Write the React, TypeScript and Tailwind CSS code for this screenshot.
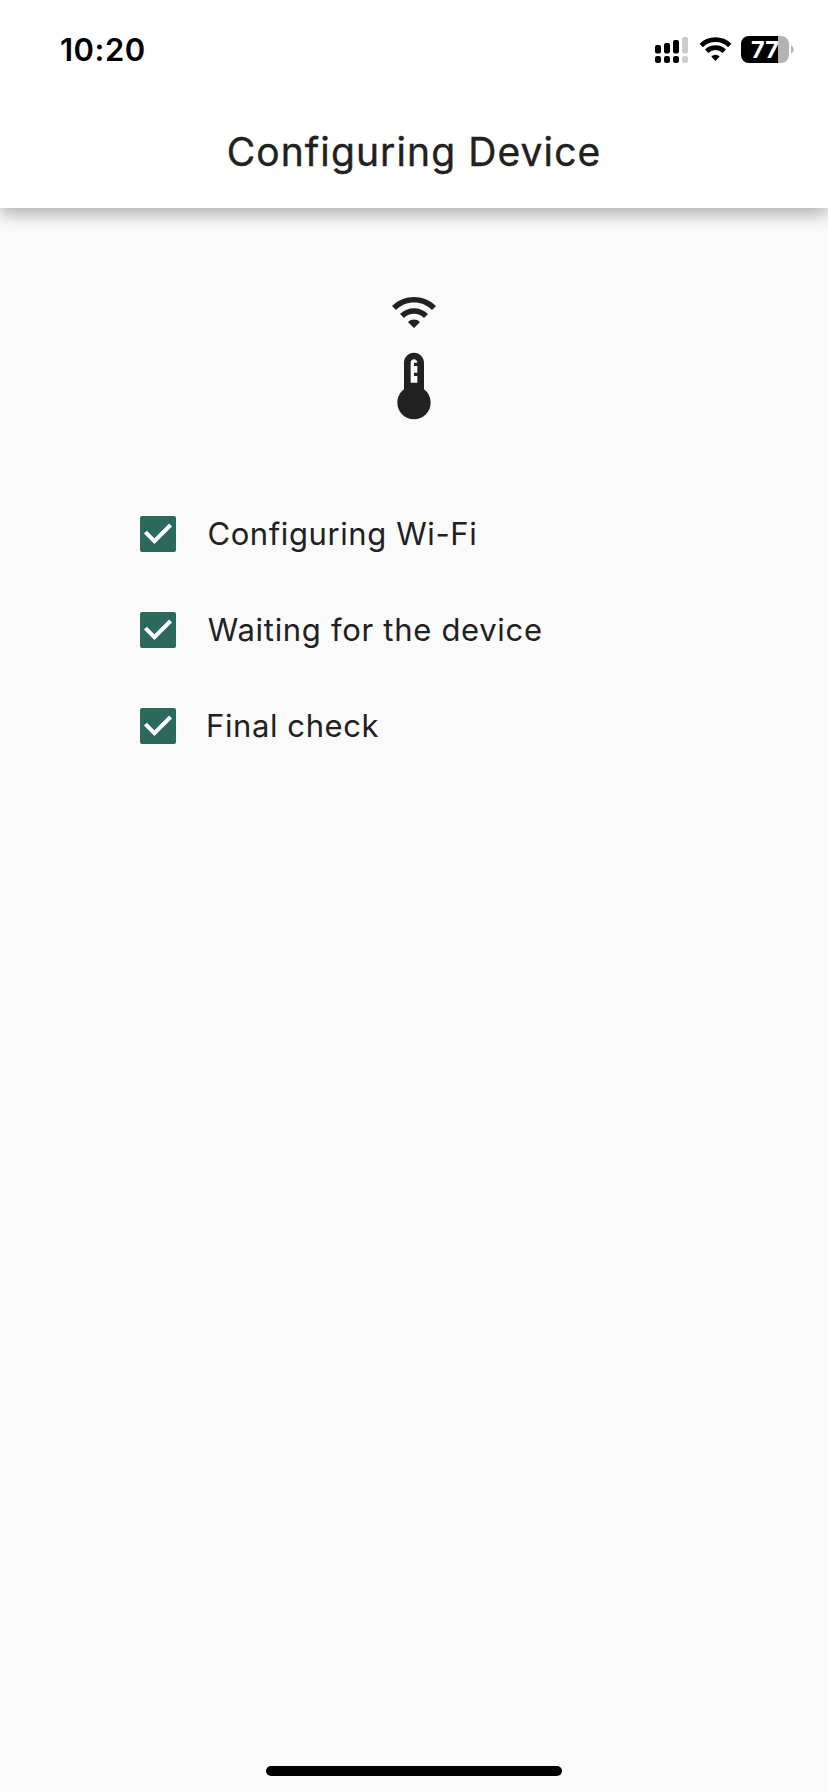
import React from "react";

const steps = [
  { label: "Configuring Wi-Fi", style: "pl-[31.4px] tracking-[0.6px]" },
  { label: "Waiting for the device", style: "pl-[31.8px] tracking-[0.7px]" },
  { label: "Final check", style: "pl-[30px] tracking-[0.6px]" },
];

function StatusIcons() {
  return (
    <svg width="144" height="32" viewBox="0 0 144 32" aria-hidden="true">
      <g>
        <rect x="1" y="10" width="6" height="8.4" rx="2" />
        <rect x="10" y="8" width="6" height="10.4" rx="2" />
        <rect x="19" y="5" width="6" height="13.4" rx="2" />
        <rect x="28" y="2" width="6" height="16.4" rx="2" fill="#cccccc" />
        <rect x="1" y="21" width="6" height="7" rx="2.2" />
        <rect x="10" y="21" width="6" height="7" rx="2.2" />
        <rect x="19" y="21" width="6" height="7" rx="2.2" />
        <rect x="28" y="21" width="6" height="7" rx="2.2" fill="#cccccc" />
      </g>
      <g fill="none" stroke="#000">
        <path d="M47.3 10.4a20.6 20.6 0 0 1 28.4 0" strokeWidth="4.8" />
        <path d="M52.7 16.2a12.8 12.8 0 0 1 17.6 0" strokeWidth="4.8" />
      </g>
      <path d="M57.3 21.5a6.1 6.1 0 0 1 8.4 0L61.5 26z" />
      <path d="M95 1h32a8 8 0 0 1 8 8v11a8 8 0 0 1-8 8H95a8 8 0 0 1-8-8V9a8 8 0 0 1 8-8z" fill="#b3b3b3" />
      <path d="M124 1H95a8 8 0 0 0-8 8v11a8 8 0 0 0 8 8h29z" />
      <path d="M137 10.5c3.6 1.4 3.6 6.6 0 8z" fill="#b3b3b3" />
    </svg>
  );
}

function Checkbox() {
  return (
    <span className="flex size-9 shrink-0 rounded-[2px] bg-[#2b695c]">
      <svg width="36" height="36" viewBox="0 0 36 36" fill="none" aria-hidden="true">
        <path d="M5.4 16.2L14.4 25.2L30.6 9" stroke="#fff" strokeWidth="4" />
      </svg>
    </span>
  );
}

export default function App() {
  return (
    <div className="flex h-[1792px] w-[828px] flex-col overflow-hidden bg-[#fafafa] font-['Inter','Liberation_Sans',sans-serif] text-[#212121]">
      <header className="h-[208px] shrink-0 bg-white shadow-[0_7px_15px_0_rgba(0,0,0,0.28)]">
        <div className="flex h-24 items-center justify-between pl-[60px] pr-[30px] pt-1 text-black">
          <time className="text-[31px] leading-8 font-semibold tracking-[0.5px]">10:20</time>
          <div className="relative mt-[2px] flex">
            <StatusIcons />
            <span className="absolute left-[92px] top-0 w-[38px] text-center text-[23.5px] leading-[29px] font-bold text-white">77</span>
          </div>
        </div>
        <h1 className="flex h-28 items-center justify-center text-[39px] leading-10 font-normal tracking-[1.1px] [-webkit-text-stroke:0.4px_#212121]">
          Configuring Device
        </h1>
      </header>
      <main className="flex grow flex-col">
        <div className="flex flex-col items-center gap-[10px] pt-20">
          <svg width="48" height="48" viewBox="0 0 24 24" fill="#212121" aria-hidden="true">
            <path d="M1 9l2 2c4.97-4.97 13.03-4.97 18 0l2-2C16.93 2.93 7.08 2.93 1 9zm8 8l3 3 3-3c-1.65-1.66-4.34-1.66-6 0zm-4-4l2 2c2.76-2.76 7.24-2.76 10 0l2-2C15.14 9.14 8.87 9.14 5 13z" />
          </svg>
          <svg width="80" height="80" viewBox="0 0 24 24" fill="#212121" aria-hidden="true">
            <path d="M15 13V5c0-1.66-1.34-3-3-3S9 3.34 9 5v8c-1.21.91-2 2.37-2 4 0 2.76 2.24 5 5 5s5-2.24 5-5c0-1.63-.79-3.09-2-4zm-4-8c0-.55.45-1 1-1s1 .45 1 1h-1v1h1v2h-1v1h1v2h-2V5z" />
          </svg>
        </div>
        <ul className="flex flex-col pl-[140px] pt-[60px]">
          {steps.map((step) => (
            <li key={step.label} className="flex h-24 items-center">
              <Checkbox />
              <span className={`text-[31px] leading-10 font-normal ${step.style}`}>{step.label}</span>
            </li>
          ))}
        </ul>
      </main>
      <footer className="flex justify-center pb-4">
        <div className="h-[10px] w-[296px] rounded-full bg-black" />
      </footer>
    </div>
  );
}
